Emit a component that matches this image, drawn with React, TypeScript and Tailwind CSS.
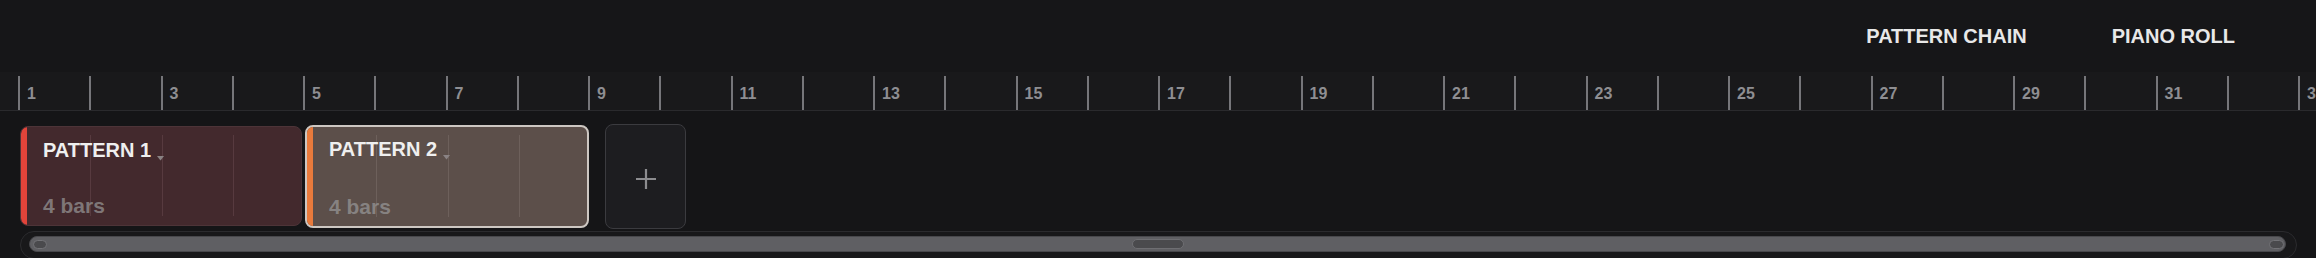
import React from "react";

const BAR = "w-[71.25px]";

function Ruler() {
  const bars = Array.from({ length: 33 }, (_, i) => i + 1);
  return (
    <div className="h-[39px] shrink-0 bg-[#19191b] border-b border-[#2a2a2d] flex pl-[18px] pt-[4px] overflow-hidden">
      {bars.map((n) => (
        <div key={n} className={`${BAR} shrink-0 flex h-full`}>
          <div className="w-[2px] h-full bg-[#76767a]" />
          {n % 2 === 1 && (
            <div className="ml-[7px] mt-[9.5px] text-[16px] leading-none font-bold text-[#8e8e92]">{n}</div>
          )}
        </div>
      ))}
    </div>
  );
}

function GridLines({ color }: { color: string }) {
  return (
    <div className="absolute top-[8px] bottom-[9px] left-[-1px] flex pointer-events-none">
      {[0, 1, 2].map((i) => (
        <div key={i} className={`${BAR} shrink-0 border-r ${color}`} />
      ))}
    </div>
  );
}

function Chevron() {
  return (
    <svg width="7" height="5" viewBox="0 0 7 5" className="ml-[6px] mb-[-1px] self-end">
      <path d="M0 0 L7 0 L3.5 4.5 Z" fill="#8a8384" />
    </svg>
  );
}

function Pattern({
  title,
  selected,
}: {
  title: string;
  selected?: boolean;
}) {
  return (
    <div
      className={
        selected
          ? "relative w-[284px] h-[103px] shrink-0 rounded-[8px] border-2 border-[#cdc7c2] bg-[#5c4f4a] flex overflow-hidden"
          : "relative w-[282px] h-[100px] shrink-0 rounded-[8px] border border-[#4d3438] bg-[#43292d] flex overflow-hidden"
      }
    >
      <div className={selected ? "w-[6px] shrink-0 bg-[#e87a3c]" : "w-[6px] shrink-0 bg-[#e2443a] rounded-l-[7px]"} />
      <GridLines color={selected ? "border-[#6d605b]" : "border-[#573a3f]"} />
      <div className="relative flex flex-col justify-between pl-[16px] pt-[12.5px] pb-[9px]">
        <div className="flex items-end">
          <span className="text-[20px] leading-none font-bold text-[#efefef]">{title}</span>
          <Chevron />
        </div>
        <span className="text-[21px] leading-none font-bold text-[#9a9a9a]/70">4 bars</span>
      </div>
    </div>
  );
}

export default function App() {
  return (
    <div
      className="w-[2316px] h-[258px] overflow-hidden bg-[#151517] flex flex-col"
      style={{ fontFamily: '"Liberation Sans", Arial, sans-serif' }}
    >
      <div className="h-[72px] shrink-0 bg-[#161618] flex items-center justify-end pr-[81px] gap-[85px]">
        <span className="text-[20px] leading-none font-bold text-[#e8e8e8]">PATTERN CHAIN</span>
        <span className="text-[20px] leading-none font-bold text-[#e8e8e8]">PIANO ROLL</span>
      </div>
      <Ruler />
      <div className="h-[120px] shrink-0 pt-[10px] flex items-center pl-[20px]">
        <Pattern title="PATTERN 1" />
        <div className="ml-[3px]">
          <Pattern title="PATTERN 2" selected />
        </div>
        <button className="ml-[16px] w-[81px] h-[105px] shrink-0 rounded-[8px] border border-[#3b3b3f] bg-[#1d1d20] flex items-center justify-center pt-[5px]">
          <svg width="20" height="20" viewBox="0 0 20 20">
            <path d="M10 0 V20 M0 10 H20" stroke="#8c8c8f" strokeWidth="2.2" />
          </svg>
        </button>
      </div>
      <div className="h-[27px] shrink-0 pl-[20px] pr-[19px]">
        <div className="h-[28px] rounded-full border border-[#2b2b2e] bg-[#18181a] pl-[8px] pr-[10px] pt-[4px]">
          <div className="h-[16px] rounded-full bg-[#5f5f63] border border-[#48484c] flex items-center justify-between pl-[3px] pr-[1px]">
            <div className="w-[14px] h-[9px] rounded-full bg-[#4a4a4d] border border-[#737377]" />
            <div className="w-[52px] h-[10px] rounded-full bg-[#4a4a4d] border border-[#6e6e72]" />
            <div className="w-[15px] h-[9px] rounded-full bg-[#4a4a4d] border border-[#737377]" />
          </div>
        </div>
      </div>
    </div>
  );
}
